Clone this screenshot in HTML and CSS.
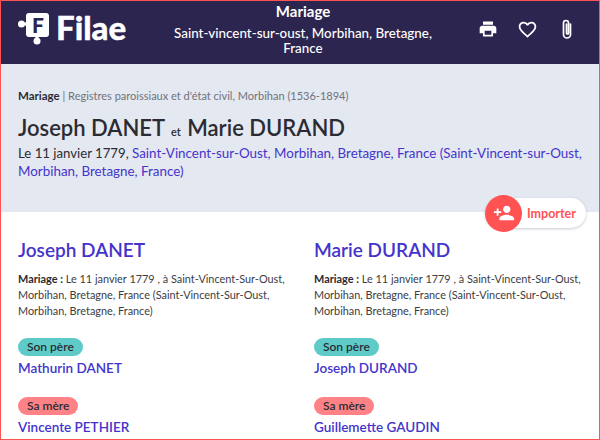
FILE: index.html
```html
<!DOCTYPE html>
<html lang="fr">
<head>
<meta charset="utf-8">
<title>Filae</title>
<link rel="stylesheet" href="styles.css">
</head>
<body>
<div class="frame">
  <header class="topbar">
    <div class="logo">
      <span class="logo-mark">
        <svg width="36" height="36" viewBox="0 0 36 36"><g fill="#fff"><rect x="8" y="3" width="23" height="24" rx="3"/><circle cx="3.500" cy="14" r="3.500"/><rect x="5" y="12.500" width="4" height="3"/><circle cx="19" cy="31" r="3.500"/><rect x="17.500" y="26" width="3" height="3"/></g></svg>
        <span class="logo-f">F</span>
      </span>
      <span class="logo-text">Filae</span>
    </div>
    <div class="title">
      <div class="title-main">Mariage</div>
      <div class="title-sub">Saint-vincent-sur-oust, Morbihan, Bretagne, France</div>
    </div>
    <div class="actions">
      <svg width="20" height="20" viewBox="0 0 24 24"><path fill="#fff" d="M19 8H5c-1.660 0-3 1.340-3 3v6h4v4h12v-4h4v-6c0-1.660-1.340-3-3-3zm-3 11H8v-5h8v5zM18 3H6v4h12V3z"/></svg>
      <svg width="21" height="21" viewBox="0 0 24 24"><path fill="#fff" d="M16.500 3c-1.740 0-3.410.81-4.500 2.090C10.910 3.810 9.240 3 7.500 3 4.420 3 2 5.420 2 8.500c0 3.780 3.400 6.860 8.550 11.540L12 21.350l1.450-1.320C18.600 15.360 22 12.280 22 8.500 22 5.420 19.580 3 16.500 3zm-4.400 15.550l-.1.100-.1-.1C7.140 14.240 4 11.390 4 8.500 4 6.500 5.500 5 7.500 5c1.540 0 3.040.99 3.570 2.360h1.870C13.460 5.990 14.960 5 16.500 5c2 0 3.500 1.500 3.500 3.500 0 2.890-3.140 5.740-7.900 10.050z"/></svg>
      <svg width="20" height="22" viewBox="0 0 20 22"><path fill="none" stroke="#fff" stroke-width="1.700" stroke-linecap="round" d="M13.500 6v10.500a3.500 3.500 0 0 1-7 0V5a2.500 2.500 0 0 1 5 0v10a1 1 0 0 1-2 0V6"/></svg>
    </div>
  </header>

  <section class="hero">
    <p class="crumb"><strong>Mariage</strong> <span class="crumb-rest">| Registres paroissiaux et d'état civil, Morbihan (1536-1894)</span></p>
    <h1 class="names">Joseph DANET <small>et</small> Marie DURAND</h1>
    <p class="place">Le 11 janvier 1779, <a href="#">Saint-Vincent-sur-Oust, Morbihan, Bretagne, France (Saint-Vincent-sur-Oust, Morbihan, Bretagne, France)</a></p>
    <div class="import">
      <span class="import-icon">
        <svg width="22" height="22" viewBox="0 0 24 24"><path fill="#fff" d="M15 12c2.210 0 4-1.790 4-4s-1.790-4-4-4-4 1.790-4 4 1.790 4 4 4zm-9-2V7H4v3H1v2h3v3h2v-3h3v-2H6zm9 4c-2.670 0-8 1.340-8 4v2h16v-2c0-2.660-5.330-4-8-4z"/></svg>
      </span>
      <span class="import-label">Importer</span>
    </div>
  </section>

  <main class="people">
    <article class="person">
      <h2 class="person-name">Joseph DANET</h2>
      <p class="detail"><strong>Mariage :</strong> Le 11 janvier 1779 , à Saint-Vincent-Sur-Oust, Morbihan, Bretagne, France (Saint-Vincent-Sur-Oust, Morbihan, Bretagne, France)</p>
      <div class="relative"><span class="tag tag-father">Son père</span><a class="rel-name" href="#">Mathurin DANET</a></div>
      <div class="relative"><span class="tag tag-mother">Sa mère</span><a class="rel-name" href="#">Vincente PETHIER</a></div>
    </article>
    <article class="person">
      <h2 class="person-name">Marie DURAND</h2>
      <p class="detail"><strong>Mariage :</strong> Le 11 janvier 1779 , à Saint-Vincent-Sur-Oust, Morbihan, Bretagne, France (Saint-Vincent-Sur-Oust, Morbihan, Bretagne, France)</p>
      <div class="relative"><span class="tag tag-father">Son père</span><a class="rel-name" href="#">Joseph DURAND</a></div>
      <div class="relative"><span class="tag tag-mother">Sa mère</span><a class="rel-name" href="#">Guillemette GAUDIN</a></div>
    </article>
  </main>
</div>
</body>
</html>
```
FILE: styles.css
```css
* { box-sizing: border-box; }
html, body { margin: 0; padding: 0; height: 100%; }
body { font-family: Lato, "Liberation Sans", sans-serif; background: #fff; color: #2b2b33; overflow: hidden; }
a { color: #4434cc; text-decoration: none; }
strong { font-weight: 700; }
.frame { width: 600px; height: 440px; border: 1px solid #ff5353; overflow: hidden; }
.topbar { height: 63px; background: #2c2550; color: #fff; display: flex; align-items: flex-start; padding: 0 17px; }
.logo { display: flex; align-items: flex-start; width: 150px; padding-top: 9px; }
.logo-mark { position: relative; width: 36px; height: 36px; display: block; margin-right: 2px; }
.logo-f { position: absolute; left: 14px; top: 5px; font: 900 21px/20px Lato, sans-serif; color: #2c2550; }
.logo-text { font: 900 33px/36px Lato, sans-serif; color: #fff; margin-top: -1px; -webkit-text-stroke: .4px #fff; }
.title { width: 272px; margin-left: -1px; text-align: center; }
.title-main { font-size: 15px; font-weight: 700; line-height: 20px; }
.title-sub { font-size: 13.400px; font-weight: 500; line-height: 15px; margin-top: 5px; }
.actions { margin-left: auto; display: flex; align-items: center; gap: 19px; padding: 17px 5px 0 0; }
.hero { height: 148px; background: #e4e8f0; padding: 24px 12px 0 17px; position: relative; }
.crumb { margin: 0; font-size: 11px; line-height: 15px; }
.crumb strong { font-size: 11.500px; }
.crumb-rest { color: #70727c; }
.names { margin: 11px 0 0; font-size: 22px; font-weight: 600; line-height: 28px; color: #2b2b33; }
.names small { font-size: 11px; margin: 0 1px; }
.place { margin: -2px 0 0; font-size: 13.200px; line-height: 18px; }
.place a { font-size: 13.400px; }
.import { position: absolute; right: 13px; top: 134px; display: flex; align-items: center; height: 30px; width: 101px; background: #fff; border-radius: 15px; box-shadow: 0 1px 3px rgba(90, 100, 130, .35); }
.import-icon { flex: none; width: 37px; height: 37px; border-radius: 50%; background: #ff5353; display: flex; align-items: center; justify-content: center; }
.import-label { font-size: 12.500px; font-weight: 700; color: #ff5353; margin-left: 5px; }
.people { display: grid; grid-template-columns: 296px 1fr; padding: 26px 8px 0 17px; }
.person-name { margin: 0; font-size: 19px; font-weight: 600; line-height: 24px; color: #4434cc; }
.detail { margin: 9px 0 0; font-size: 10.900px; line-height: 16px; color: #3c3c44; }
.detail strong { color: #2b2b33; }
.relative { margin-top: 19px; }
.relative + .relative { margin-top: 20px; }
.tag { display: table; height: 18px; padding: 0 9px; border-radius: 9px; font-size: 12px; line-height: 18px; font-weight: 600; color: #2b2b33; }
.tag-father { background: #5fcbc9; }
.tag-mother { background: #ff8286; }
.rel-name { display: block; margin-top: 3px; font-size: 13.500px; font-weight: 600; line-height: 18px; }
```
